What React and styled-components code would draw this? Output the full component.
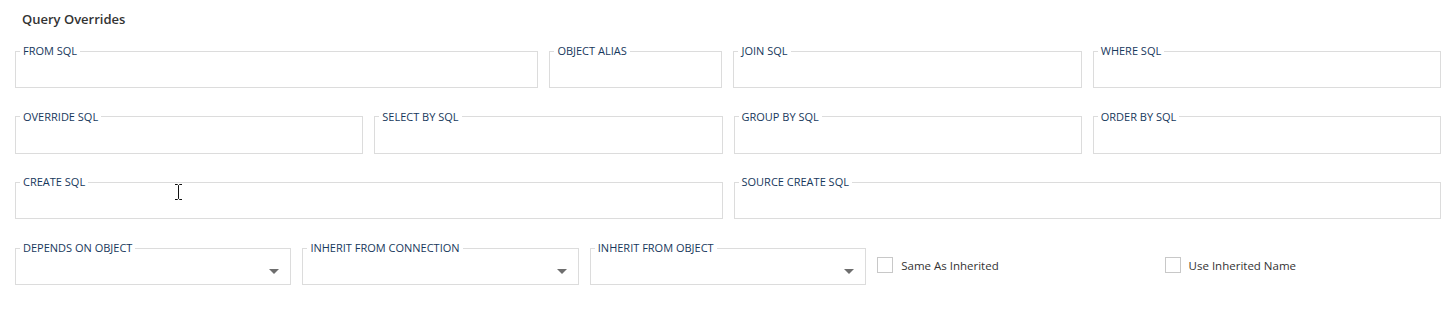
import React from "react"
import styled, { createGlobalStyle } from "styled-components"

const GlobalStyle = createGlobalStyle`
  html, body {
    margin: 0;
    padding: 0;
    background: #fff;
  }
  body {
    font-family: "Open Sans", "Noto Sans", sans-serif;
    color: #333;
  }
`

const Page = styled.div`
  padding: 10px 14px 0 15px;
`

const Title = styled.h2`
  margin: 0 0 16px 7px;
  font-size: 13px;
  font-weight: 600;
  line-height: 18px;
  color: #333;
`

const Rows = styled.div`
  display: flex;
  flex-direction: column;
  gap: 21.7px;
`

const Row = styled.div`
  display: grid;
  grid-template-columns: ${(p) => p.cols};
  column-gap: 11px;
`

const Field = styled.fieldset`
  position: relative;
  box-sizing: border-box;
  height: 44px;
  margin: 0;
  padding: 0 4px;
  border: 1px solid #dcdcdc;
  min-width: 0;
`

const Legend = styled.legend`
  padding: 0 3px;
  font-size: 11px;
  line-height: 14px;
  color: #17385c;
  text-transform: uppercase;
  white-space: nowrap;
`

const Body = styled.div`
  display: flex;
  align-items: center;
  justify-content: flex-end;
  height: 30px;
  padding-right: 7px;
`

const Caret = styled.span`
  width: 0;
  height: 0;
  border-left: 5.5px solid transparent;
  border-right: 5.5px solid transparent;
  border-top: 5px solid #6e6e6e;
  margin-top: 2px;
`

const CheckCell = styled.label`
  display: flex;
  align-items: center;
  gap: 8px;
  padding-top: 4px;
  font-size: 11.5px;
  color: #333;
`

const Box = styled.span`
  box-sizing: border-box;
  width: 16px;
  height: 16px;
  border: 1px solid #c8c8c8;
  background: #fff;
`

const Cursor = styled.svg`
  position: absolute;
  left: 158px;
  top: -5px;
`

function TextField({ label, children }) {
  return (
    <Field>
      <Legend>{label}</Legend>
      {children}
    </Field>
  )
}

function SelectField({ label }) {
  return (
    <Field>
      <Legend>{label}</Legend>
      <Body>
        <Caret />
      </Body>
    </Field>
  )
}

function Check({ label }) {
  return (
    <CheckCell>
      <Box />
      {label}
    </CheckCell>
  )
}

export default function App() {
  return (
    <>
      <GlobalStyle />
      <Page>
        <Title>Query Overrides</Title>
        <Rows>
          <Row cols="523fr 173fr 348fr 348fr">
            <TextField label="From SQL" />
            <TextField label="Object Alias" />
            <TextField label="Join SQL" />
            <TextField label="Where SQL" />
          </Row>
          <Row cols="repeat(4, 1fr)">
            <TextField label="Override SQL" />
            <TextField label="Select By SQL" />
            <TextField label="Group By SQL" />
            <TextField label="Order By SQL" />
          </Row>
          <Row cols="1fr 1fr">
            <TextField label="Create SQL">
              <Cursor width="9" height="16" viewBox="0 0 9 16">
                <path
                  d="M1 0.5h2.5L4.5 1.5L5.5 0.5H8M4.5 1.5V14.5M1 15.5h2.5L4.5 14.5L5.5 15.5H8"
                  fill="none"
                  stroke="#111"
                  strokeWidth="1"
                />
              </Cursor>
            </TextField>
            <TextField label="Source Create SQL" />
          </Row>
          <Row cols="repeat(5, 1fr)">
            <SelectField label="Depends On Object" />
            <SelectField label="Inherit From Connection" />
            <SelectField label="Inherit From Object" />
            <Check label="Same As Inherited" />
            <Check label="Use Inherited Name" />
          </Row>
        </Rows>
      </Page>
    </>
  )
}
